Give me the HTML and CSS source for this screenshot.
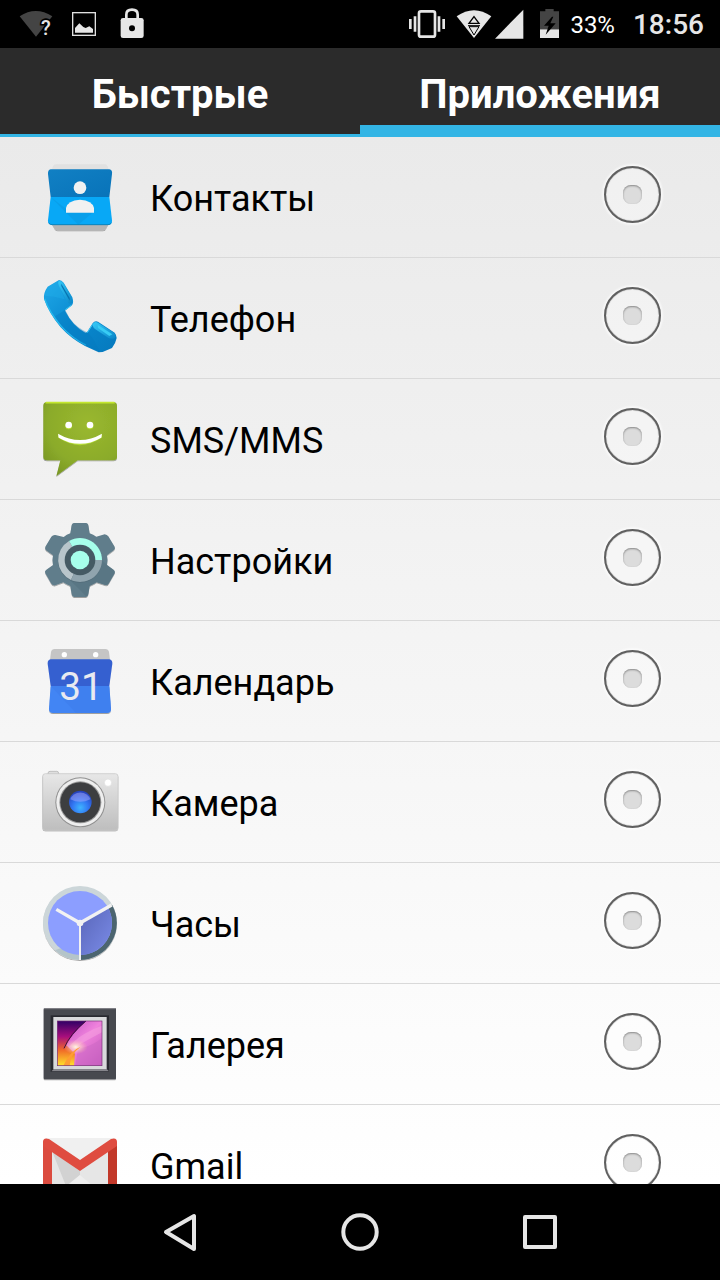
FILE: index.html
```html
<!DOCTYPE html>
<html lang="ru">
<head>
	<meta charset="utf-8">
	<meta name="viewport" content="width=device-width, initial-scale=1">
	<title>Приложения</title>
	<link rel="stylesheet" href="styles.css">
</head>
<body>
<div class="screen">
	<!-- status bar -->
	<div class="status">
		<div class="status-left">
			<svg width="48" height="48" viewBox="36 0 144 144">
				<path d="M59 49Q107 17 157 49L108 110Z" fill="#444"/>
				<text class="wifi-mark" x="123" y="106">?</text>
			</svg>
			<svg width="48" height="48" viewBox="180 0 144 144">
				<rect x="218" y="38" width="68" height="68" fill="none" stroke="#e0e0e0" stroke-width="4"/>
				<path d="M225 98V84L238 70L250 81L257 84L268 79L279 87V98Z" fill="#e6e6e6"/>
			</svg>
			<svg width="48" height="48" viewBox="324 0 144 144">
				<path d="M379 60V44Q379 29 396 29Q413 29 413 44V60" fill="none" stroke="#e6e6e6" stroke-width="8"/>
				<rect x="362" y="54" width="69" height="60" rx="7" fill="#e6e6e6"/>
				<circle cx="396" cy="85" r="9" fill="#000"/>
			</svg>
		</div>
		<div class="status-right">
			<svg width="48" height="48" viewBox="9 0 144 144">
				<rect x="57" y="34" width="48" height="76" rx="6" fill="none" stroke="#e6e6e6" stroke-width="8"/>
				<path d="M31 57V87M131 57V87" stroke="#e6e6e6" stroke-width="8"/>
				<path d="M45 49V95M117 49V95" stroke="#e6e6e6" stroke-width="8"/>
			</svg>
			<svg width="42" height="48" viewBox="153 0 126 144">
				<path d="M170 49Q222 12 274 49L222 114Z" fill="#e6e6e6"/>
				<path d="M222 50L237 70H207Z" fill="none" stroke="#000" stroke-width="4"/>
				<path d="M204 77H240" stroke="#000" stroke-width="3"/>
				<path d="M207 80H237L222 105Z" fill="none" stroke="#000" stroke-width="3"/>
			</svg>
			<svg width="39" height="48" viewBox="279 0 117 144">
				<path d="M285 116L370 29V116Z" fill="#e6e6e6"/>
			</svg>
			<svg width="32" height="48" viewBox="396 0 96 144">
				<path d="M420 34H436V27H461V34H477V88H420Z" fill="#444"/>
				<path d="M420 88H477V114H420Z" fill="#e6e6e6"/>
				<path d="M456 50L432 77H446L437 104L467 70H451L460 50Z" fill="#000"/>
			</svg>
			<span class="battery">33%</span>
			<span class="clock">18:56</span>
		</div>
	</div>

	<!-- tabs -->
	<div class="tabs" role="tablist">
		<button class="tab" type="button" role="tab" aria-selected="false">Быстрые</button>
		<button class="tab on" type="button" role="tab" aria-selected="true">Приложения</button>
	</div>

	<!-- applications -->
	<div class="list">
		<label class="row">
			<svg class="icon" viewBox="30 21 240 240">
				<defs>
					<linearGradient id="cTop" x1="0" y1="0" x2="1" y2="1"><stop offset="0" stop-color="#1180c4"/><stop offset="1" stop-color="#0873b9"/></linearGradient>
					<filter id="soft" x="-20%" y="-20%" width="140%" height="150%"><feDropShadow dx="0" dy="3" stdDeviation="2" flood-color="#000" flood-opacity=".35"/></filter>
				</defs>
				<path d="M66 60Q68 43 78 43H224Q234 43 236 60Z" fill="#e1e1e1"/>
				<path d="M66 222H235L226 238Q223 241 218 241H84Q78 241 75 237Z" fill="#b5b5b5" filter="url(#soft)"/>
				<path d="M62 58H238Q248 60 246 72L238 141H62L54 72Q53 60 62 58Z" fill="url(#cTop)"/>
				<path d="M62 141H238L246 211Q247 224 236 224H64Q53 224 54 211Z" fill="#08a8f6"/>
				<path d="M62 141L108 188L145 224L188 188L108 176Z" fill="#0899e2" opacity=".6"/>
				<path d="M56 219Q60 224 66 224H234Q241 224 244 219" fill="none" stroke="#0783bd" stroke-width="3"/>
				<circle cx="150" cy="113" r="19" fill="#f1f1f1"/>
				<path d="M108 188V174Q113 151 150 149Q187 151 192 174V188Z" fill="#f1f1f1"/>
			</svg>
			<span class="name">Контакты</span>
			<input class="radio" type="radio" name="app">
		</label>
		<label class="row">
			<svg class="icon" viewBox="30 24 240 240">
				<defs>
					<linearGradient id="pBody" x1="0" y1="0" x2="1" y2="1"><stop offset="0" stop-color="#20a8e8"/><stop offset=".5" stop-color="#0889cf"/><stop offset="1" stop-color="#0679bd"/></linearGradient>
					<linearGradient id="pEnd" x1="0" y1="0" x2="1" y2="1"><stop offset="0" stop-color="#35c9f7"/><stop offset="1" stop-color="#0a86c8"/></linearGradient>
				</defs>
				<path d="M87 30L53 50Q40 68 42 86Q56 128 92 172Q124 207 165 228L206 247L218 246L246 234Q257 220 260 204Q259 194 254 188L204 155Q194 151 188 160L171 187L166 188Q128 168 105 122L126 106Q132 98 127 82L101 38Q95 30 87 30Z" fill="url(#pBody)"/>
				<path d="M44 86Q58 127 94 169Q126 204 168 225" fill="none" stroke="#27b9ed" stroke-width="4"/>
				<path d="M54 50L43 77L72 80L104 88L83 34Z" fill="#25b7ef" opacity=".3"/>
				<path d="M86 33Q82 39 87 48L112 96Q118 105 127 98Q128 88 121 74L100 40Q94 31 86 33Z" fill="url(#pEnd)"/>
				<path d="M94 41L119 84V92L94 48Z" fill="#0673b1"/>
				<path d="M107 122L119 145Q140 174 174 188L187 203L210 245L160 222Q104 188 75 139L104 121Z" fill="#0677bd" opacity=".4"/>
				<path d="M190 160Q195 153 204 158L253 189Q262 202 250 206L237 205L194 176Q185 169 190 160Z" fill="url(#pEnd)"/>
				<path d="M203 164L247 193L238 198L204 174Z" fill="#38ccf4"/>
				<path d="M106 119L124 106M172 188L188 163" stroke="#3ccaf5" stroke-width="3"/>
			</svg>
			<span class="name">Телефон</span>
			<input class="radio" type="radio" name="app">
		</label>
		<label class="row">
			<svg class="icon" viewBox="30 27 240 240">
				<defs>
					<radialGradient id="sBody" cx=".6" cy=".3" r=".9"><stop offset="0" stop-color="#9ab82f"/><stop offset=".6" stop-color="#8bab2a"/><stop offset="1" stop-color="#718e22"/></radialGradient>
				</defs>
				<path d="M51 36H250Q261 36 261 47V201Q261 211 250 211H143L79 258L91 211H51Q40 211 40 201V47Q40 36 51 36Z" fill="url(#sBody)" filter="url(#soft)"/>
				<path d="M49 38H252" stroke="#c4e72f" stroke-width="5" stroke-linecap="round"/>
				<circle cx="116" cy="108" r="10" fill="#b4dc35"/>
				<circle cx="180" cy="108" r="10" fill="#b4dc35"/>
				<circle cx="116" cy="105" r="10" fill="#fff"/>
				<circle cx="180" cy="105" r="10" fill="#fff"/>
				<path d="M84 135Q150 171 216 135V142Q150 189 84 142Z" fill="#b4dc35"/>
				<path d="M84 131Q150 169 216 131L214 143Q150 180 86 143Z" fill="#fff"/>
			</svg>
			<span class="name">SMS/MMS</span>
			<input class="radio" type="radio" name="app">
		</label>
		<label class="row">
			<svg class="icon" viewBox="30 24 240 240">
				<path d="M131 33H169Q174 34 175 39L179 64Q190 68 199 74L224 67Q231 68 235 73L254 104Q257 110 251 115L231 130Q234 144 231 159L252 174Q257 179 254 184L236 215Q232 221 225 219L200 211Q190 218 179 222L175 247Q174 254 168 255H132Q126 254 125 247L121 222Q110 218 100 211L76 220Q68 221 64 215L46 184Q43 178 48 174L69 159Q66 144 69 130L48 115Q44 110 46 104L64 74Q69 68 76 69L101 75Q110 68 121 64L125 39Q126 34 131 33Z" fill="#607d8b" filter="url(#soft)"/>
				<path d="M108 193L170 254L174 248L179 222L200 211L225 219L235 216L254 184L250 174L215 145Z" fill="#526f7c" opacity=".45"/>
				<circle cx="150" cy="146" r="66" fill="#4b626d" opacity=".5"/>
				<path d="M150 144L117 87A66 66 0 0 0 123 204Z" fill="#b8c5cb"/>
				<path d="M150 144L117 87A66 66 0 0 1 216 144Z" fill="#a7ffeb"/>
				<path d="M150 144H216A66 66 0 0 1 123 204Z" fill="#90a4ae"/>
				<circle cx="150" cy="144" r="46" fill="#455a64"/>
				<circle cx="150" cy="144" r="28" fill="#a7ffeb"/>
			</svg>
			<span class="name">Настройки</span>
			<input class="radio" type="radio" name="app">
		</label>
		<label class="row">
			<svg class="icon" viewBox="30 18 240 240">
				<path d="M60 76L63 51Q65 42 74 42H226Q235 42 237 51L240 76Z" fill="#c5c5c5"/>
				<circle cx="103" cy="59" r="8" fill="#fff"/>
				<circle cx="197" cy="59" r="8" fill="#fff"/>
				<path d="M62 153H238L243 222Q243 234 231 234H69Q57 234 57 222Z" fill="#4285f4" filter="url(#soft)"/>
				<path d="M62 73H238Q248 75 247 86L238 153H62L53 86Q52 75 62 73Z" fill="#3560d0"/>
				<path d="M62 153L137 233H231Q243 233 243 222L238 153Z" fill="#3b7be8" opacity=".45"/>
				<text class="day" x="153" y="194" text-anchor="middle">31</text>
			</svg>
			<span class="name">Календарь</span>
			<input class="radio" type="radio" name="app">
		</label>
		<label class="row">
			<svg class="icon" viewBox="30 21 240 240">
				<defs>
					<linearGradient id="kBody" x1="0" y1="0" x2="0" y2="1"><stop offset="0" stop-color="#e7e7e7"/><stop offset="1" stop-color="#bebebe"/></linearGradient>
					<radialGradient id="kLens" cx=".5" cy=".75" r=".7"><stop offset="0" stop-color="#3fb4ff"/><stop offset=".5" stop-color="#3277f3"/><stop offset="1" stop-color="#2744bb"/></radialGradient>
				</defs>
				<rect x="54" y="49" width="32" height="14" rx="6" fill="#dedede" stroke="#aaa" stroke-width="2"/>
				<rect x="38" y="56" width="226" height="169" rx="8" fill="url(#kBody)" stroke="#c4c4c4" stroke-width="2" filter="url(#soft)"/>
				<circle cx="151" cy="142" r="75" fill="#909090"/>
				<circle cx="151" cy="142" r="72" fill="#eee"/>
				<circle cx="151" cy="142" r="63" fill="#999"/>
				<circle cx="151" cy="142" r="60" fill="#3d3e40"/>
				<circle cx="151" cy="141" r="34" fill="url(#kLens)"/>
				<path d="M121 133A31 27 0 0 1 181 133Q151 148 121 133Z" fill="#b3b0ff" opacity=".45"/>
				<circle cx="234" cy="83" r="11" fill="#fff" stroke="#ddd" stroke-width="2"/>
			</svg>
			<span class="name">Камера</span>
			<input class="radio" type="radio" name="app">
		</label>
		<label class="row">
			<svg class="icon" viewBox="30 24 240 240">
				<defs>
					<linearGradient id="hShade" x1="0" y1="0" x2="1" y2="1"><stop offset="0" stop-color="#5865b8"/><stop offset="1" stop-color="#7b8ce8"/></linearGradient>
				</defs>
				<circle cx="150" cy="144" r="111" fill="#ccd6d9" filter="url(#soft)"/>
				<path d="M150 144L246 89A111 111 0 0 1 150 255Z" fill="#4c6570"/>
				<path d="M150 240V255A111 111 0 0 1 75 226L91 220Z" fill="#b4c4c9"/>
				<circle cx="150" cy="144" r="96" fill="#8c9eff"/>
				<path d="M150 144L233 96A96 96 0 0 1 150 240Z" fill="url(#hShade)"/>
				<path d="M150 144L79 103M150 144L245 90" stroke="#f2f2f2" stroke-width="10"/>
				<path d="M150 144V255" stroke="#f2f2f2" stroke-width="6"/>
				<circle cx="150" cy="144" r="10" fill="#f2f2f2"/>
			</svg>
			<span class="name">Часы</span>
			<input class="radio" type="radio" name="app">
		</label>
		<label class="row">
			<svg class="icon" viewBox="30 27 240 240">
				<defs>
					<linearGradient id="gLeft" x1="0" y1="0" x2="0" y2="1"><stop offset="0" stop-color="#310066"/><stop offset=".35" stop-color="#a80e7d"/><stop offset=".65" stop-color="#f06a28"/><stop offset="1" stop-color="#ffe22b"/></linearGradient>
					<linearGradient id="gRight" x1="0" y1="0" x2="1" y2="1"><stop offset="0" stop-color="#b345bd"/><stop offset=".5" stop-color="#ef82dc"/><stop offset="1" stop-color="#c055b8"/></linearGradient>
					<radialGradient id="gGlow"><stop offset="0" stop-color="#fff9df"/><stop offset="1" stop-color="#ffb9a8" stop-opacity="0"/></radialGradient>
				</defs>
				<rect x="41" y="39" width="217" height="214" rx="3" fill="#474850" filter="url(#soft)"/>
				<path d="M42 41H257" stroke="#8b8b91" stroke-width="3"/>
				<rect x="62" y="61" width="175" height="170" fill="#292a30"/>
				<path d="M64 229L72 221H229L237 229Z" fill="#85858b"/>
				<rect x="70" y="66" width="160" height="156" fill="#d9dadc"/>
				<rect x="82" y="78" width="134" height="134" fill="url(#gRight)"/>
				<path d="M82 78H168Q123 119 109 151L135 176L132 212H82Z" fill="url(#gLeft)"/>
				<path d="M117 157Q143 119 216 92V112Q169 137 145 151Z" fill="#f59ee0" opacity=".6"/>
				<path d="M144 160Q176 159 216 130V212H136Z" fill="#cc68c4" opacity=".55"/>
				<ellipse cx="137" cy="156" rx="36" ry="22" fill="url(#gGlow)"/>
				<path d="M100 212Q121 166 152 155Q120 178 119 212Z" fill="#ff9d32"/>
				<path d="M168 78Q119 118 102 160" fill="none" stroke="#38103e" stroke-width="3"/>
				<rect x="82" y="78" width="134" height="134" fill="none" stroke="#753075" stroke-width="2"/>
			</svg>
			<span class="name">Галерея</span>
			<input class="radio" type="radio" name="app">
		</label>
		<label class="row">
			<svg class="icon" viewBox="0 0 80 80">
				<path d="M6 13H74V68H6Z" fill="#f0f0f0"/>
				<path d="M12 26L40 46L68 26V68H12Z" fill="#e6e6e6"/>
				<path d="M12 26L40 46V50L26 61Z" fill="#d2d2d2"/>
				<path d="M20 67L40 50L60 67Z" fill="#eee"/>
				<path d="M3 20L12 26V68H6Q3 68 3 65Z" fill="#db4b3f"/>
				<path d="M77 20L68 26V68H74Q77 68 77 65Z" fill="#c23829"/>
				<path d="M3 21V17Q3 12 9 14L40 35L71 14Q77 12 77 17V21L40 46Z" fill="#df4c40"/>
			</svg>
			<span class="name">Gmail</span>
			<input class="radio" type="radio" name="app">
		</label>
	</div>

	<!-- navigation bar -->
	<div class="nav">
		<button class="nav-btn" type="button" aria-label="Назад">
			<svg width="48" height="48" viewBox="0 0 48 48"><path d="M10 24L38 8V41Z"/></svg>
		</button>
		<button class="nav-btn" type="button" aria-label="Домой">
			<svg width="48" height="48" viewBox="0 0 48 48"><circle cx="24" cy="24" r="16.7"/></svg>
		</button>
		<button class="nav-btn" type="button" aria-label="Недавние">
			<svg width="48" height="48" viewBox="0 0 48 48"><rect x="9" y="9" width="30" height="30"/></svg>
		</button>
	</div>
</div>
</body>
</html>
```
FILE: styles.css
```css
*{
	margin: 0;
	padding: 0;
	box-sizing: border-box;
}
body{
	font-family: Roboto, "Noto Sans", sans-serif;
	background: #000;
}
svg{
	display: block;
	flex-shrink: 0;
}
button{
	border: 0;
	font-family: inherit;
	cursor: pointer;
}
.screen{
	height: 100vh;
	display: flex;
	flex-direction: column;
}

/* status bar */
.status{
	flex-shrink: 0;
	display: flex;
	justify-content: space-between;
	padding: 0 16px 0 12px;
	background: #000;
	color: #e6e6e6;
	line-height: 50px;
	height: 48px;
}
.status-left,
.status-right{
	display: flex;
}
.wifi-mark{
	font-size: 60px;
	font-weight: 500;
	fill: #e6e6e6;
	stroke: #000;
	stroke-width: 10px;
	paint-order: stroke;
}
.battery{
	margin-left: 6px;
	font-size: 24px;
	color: #fff;
}
.clock{
	margin-left: 18px;
	font-size: 28px;
	font-weight: 500;
}

/* tabs */
.tabs{
	flex-shrink: 0;
	display: flex;
	background: #2b2b2b;
}
.tab{
	flex: 1;
	height: 89px;
	padding-top: 4px;
	background: none;
	box-shadow: inset 0 -3px #33b5e5;
	color: #fff;
	font-size: 40px;
	font-weight: 700;
}
.tab.on{
	box-shadow: inset 0 -12px #33b5e5;
}

/* list */
.list{
	flex: 1;
	min-height: 0;
	overflow: hidden;
	background: linear-gradient(#eaeaea, #fff);
}
.row{
	display: flex;
	align-items: center;
	padding: 0 59px 0 40px;
	border-bottom: 1px solid #d9d9d9;
	height: 121px;
	cursor: pointer;
}
.icon{
	width: 80px;
	height: 80px;
}
.day{
	font-size: 116px;
	font-weight: 400;
	fill: #e8eaf0;
}
.name{
	flex: 1;
	margin-left: 30px;
	padding-top: 4px;
	font-size: 36px;
	line-height: 42px;
	color: #000;
}
.radio{
	appearance: none;
	display: grid;
	place-items: center;
	width: 57px;
	height: 57px;
	margin-bottom: 5px;
	border: 2px solid #606060;
	border-radius: 50%;
	background: rgba(255,255,255,.3);
	box-shadow: 0 0 2px 2px rgba(255,255,255,.6), inset 0 0 1px #606060;
}
.radio::before{
	content: "";
	width: 19px;
	height: 19px;
	border-radius: 8px;
	background: #dcdcdc;
	box-shadow: inset 0 1px 2px #888;
}
.radio:checked::before{
	background: #33b5e5;
}

/* navigation bar */
.nav{
	flex-shrink: 0;
	display: flex;
	justify-content: center;
	background: #000;
}
.nav-btn{
	width: 25%;
	height: 96px;
	display: flex;
	align-items: center;
	justify-content: center;
	background: none;
}
.nav-btn svg{
	fill: none;
	stroke: #e6e6e6;
	stroke-width: 4px;
	stroke-linejoin: round;
}
```
